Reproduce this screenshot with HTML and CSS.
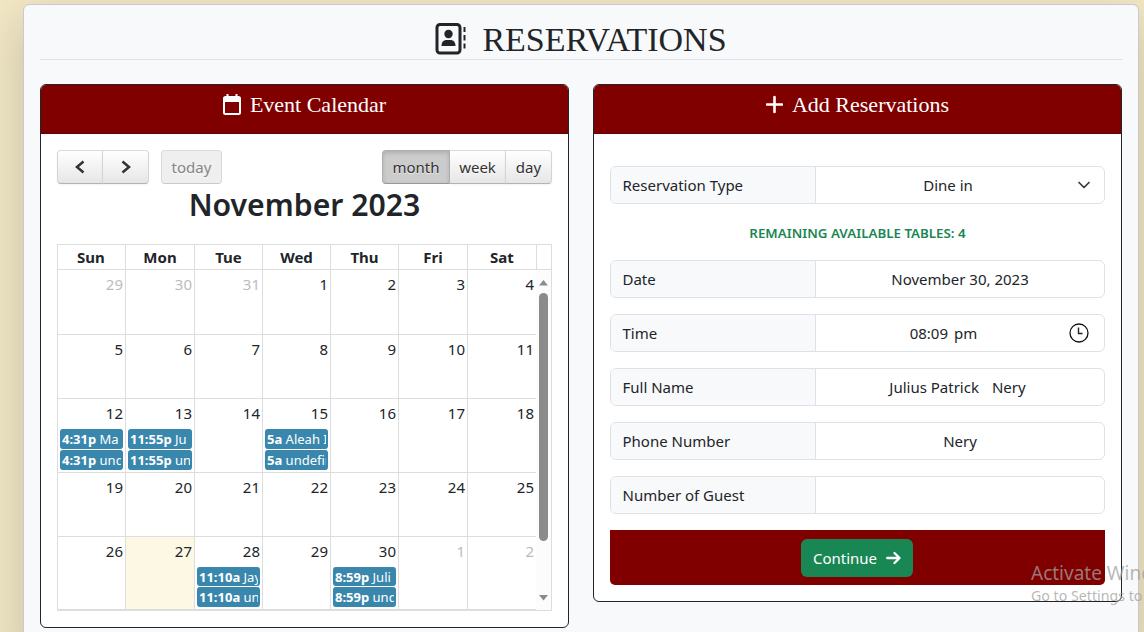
FILE: index.html
```html
<!DOCTYPE html>
<html lang="en">
<head>
<meta charset="utf-8">
<title>Reservations</title>
<link rel="stylesheet" href="styles.css">
</head>
<body>
<main class="panel">
  <h1 class="page-title">
    <svg class="title-icon" width="32" height="34" viewBox="0 0 32 34"><rect x="2" y="2.5" width="23" height="28.5" rx="3" fill="none" stroke="currentColor" stroke-width="3"/><circle cx="13.5" cy="12" r="4.2" fill="currentColor"/><path d="M6.5 24c0-4 2.200-6 5-6h4c2.800 0 5 2 5 6z" fill="currentColor"/><path d="M29.500 5v5M29.500 13v5.500M29.500 21.500v5" stroke="currentColor" stroke-width="2"/></svg>
    <span>RESERVATIONS</span>
  </h1>
  <div class="columns">
    <section class="card calendar-card">
      <header class="card-header">
        <svg width="18" height="21" viewBox="0 0 18 21"><path d="M4.500 0v4M13.500 0v4" stroke="#fff" stroke-width="2"/><rect x="1" y="3" width="16" height="17" rx="1.500" fill="none" stroke="#fff" stroke-width="2"/><path d="M1 3h16v5H1z" fill="#fff"/></svg>
        <span>Event Calendar</span>
      </header>
      <div class="calendar">
        <div class="toolbar">
          <div class="btn-group">
            <button class="fc-btn arrow"><svg width="10" height="14" viewBox="0 0 10 14"><path d="M8.500 1.500L2 7l6.500 5.500" fill="none" stroke="#333" stroke-width="2.500"/></svg></button>
            <button class="fc-btn arrow"><svg width="10" height="14" viewBox="0 0 10 14"><path d="M1.500 1.500L8 7l-6.500 5.500" fill="none" stroke="#333" stroke-width="2.500"/></svg></button>
          </div>
          <button class="fc-btn today-btn">today</button>
          <div class="btn-group views">
            <button class="fc-btn month active">month</button>
            <button class="fc-btn week">week</button>
            <button class="fc-btn dayview">day</button>
          </div>
        </div>
        <h2 class="month-title">November 2023</h2>
        <div class="grid-frame">
          <div class="weekdays"><b>Sun</b><b>Mon</b><b>Tue</b><b>Wed</b><b>Thu</b><b>Fri</b><b>Sat</b><b></b></div>
          <div class="scroller">
            <div class="days">
              <div class="day other">29</div><div class="day other">30</div><div class="day other">31</div><div class="day">1</div><div class="day">2</div><div class="day">3</div><div class="day">4</div>
              <div class="day">5</div><div class="day">6</div><div class="day">7</div><div class="day">8</div><div class="day">9</div><div class="day">10</div><div class="day">11</div>
              <div class="day">12<div class="events"><p class="event"><b>4:31p</b> Ma</p><p class="event"><b>4:31p</b> undefined</p></div></div>
              <div class="day">13<div class="events"><p class="event"><b>11:55p</b> Ju</p><p class="event"><b>11:55p</b> undefined</p></div></div>
              <div class="day">14</div>
              <div class="day">15<div class="events"><p class="event"><b>5a</b> Aleah Ivy</p><p class="event"><b>5a</b> undefined</p></div></div>
              <div class="day">16</div><div class="day">17</div><div class="day">18</div>
              <div class="day">19</div><div class="day">20</div><div class="day">21</div><div class="day">22</div><div class="day">23</div><div class="day">24</div><div class="day">25</div>
              <div class="day">26</div><div class="day today">27</div>
              <div class="day">28<div class="events"><p class="event short"><b>11:10a</b> Jay</p><p class="event"><b>11:10a</b> undefined</p></div></div>
              <div class="day">29</div>
              <div class="day">30<div class="events"><p class="event short"><b>8:59p</b> Juli</p><p class="event"><b>8:59p</b> undefined</p></div></div>
              <div class="day other">1</div><div class="day other">2</div>
            </div>
            <div class="scrollbar">
              <svg width="9" height="6" viewBox="0 0 9 6"><path d="M4.500 0L9 5.500H0z" fill="#8b8b8b"/></svg>
              <i class="thumb"></i>
              <svg class="down" width="9" height="6" viewBox="0 0 9 6"><path d="M0 0h9L4.500 5.500z" fill="#8b8b8b"/></svg>
            </div>
          </div>
        </div>
      </div>
    </section>
    <section class="card form-card">
      <header class="card-header">
        <svg width="17" height="21" viewBox="0 0 17 21"><path d="M8.500 3v15M1 10.500h15" stroke="#fff" stroke-width="2.600" stroke-linecap="round"/></svg>
        <span>Add Reservations</span>
      </header>
      <form class="form">
        <div class="field first"><label>Reservation Type</label><div class="value select"><span>Dine in</span><svg class="end-icon" width="16" height="16" viewBox="0 0 16 16"><path d="M3 5.500l5 5 5-5" fill="none" stroke="#343a40" stroke-width="1.700" stroke-linecap="round" stroke-linejoin="round"/></svg></div></div>
        <p class="tables-left">REMAINING AVAILABLE TABLES: 4</p>
        <div class="field"><label>Date</label><div class="value">November 30, 2023</div></div>
        <div class="field"><label>Time</label><div class="value time"><span>08:09</span><span>pm</span><svg class="end-icon" width="20" height="20" viewBox="0 0 20 20"><circle cx="10" cy="10" r="9" fill="none" stroke="#111" stroke-width="1.300"/><path d="M9.500 4.500v6h4" fill="none" stroke="#222" stroke-width="1.400"/></svg></div></div>
        <div class="field"><label>Full Name</label><div class="value name"><span>Julius Patrick</span><span>Nery</span></div></div>
        <div class="field"><label>Phone Number</label><div class="value">Nery</div></div>
        <div class="field"><label>Number of Guest</label><div class="value"></div></div>
        <div class="form-footer">
          <button type="button" class="continue"><span>Continue</span><svg width="15" height="14" viewBox="0 0 15 14"><path d="M1.200 7h12M8.500 2l5 5-5 5" fill="none" stroke="#fff" stroke-width="2.300" stroke-linecap="round" stroke-linejoin="round"/></svg></button>
        </div>
      </form>
    </section>
  </div>
</main>
<aside class="watermark"><div class="wm-title">Activate Windows</div><div class="wm-text">Go to Settings to activate Windows.</div></aside>
</body>
</html>
```
FILE: styles.css
```css
* { box-sizing: border-box; }
html, body { height: 100%; }
body {
  margin: 0;
  padding: 4px 5px 0 23px;
  overflow: hidden;
  position: relative;
  background: #f1e7c5;
  color: #212529;
  font: 15px/24px "Noto Sans", "Open Sans", sans-serif;
}
h1, h2, p { margin: 0; font-weight: 400; }
button { font: inherit; color: inherit; margin: 0; padding: 0; }
.panel {
  height: 660px;
  padding: 0 16px;
  background: #f8f9fa;
  background-clip: padding-box;
  border: 1px solid #c9cacd;
  border-radius: 6px;
  box-shadow: 0 16px 48px rgba(0, 0, 0, .175);
}
.page-title {
  height: 55px;
  border-bottom: 1px solid #dee2e6;
  display: flex;
  justify-content: center;
  gap: 15px;
  font: 34px/36px "Liberation Serif", serif;
  padding-top: 17px;
}
.columns {
  display: grid;
  grid-template-columns: 529px 529px;
  gap: 24px;
  align-items: start;
  padding-top: 24px;
}
.card {
  background: #fff;
  border: 1px solid #212529;
  border-radius: 6px;
  overflow: hidden;
}
.calendar-card { height: 544px; }
.form-card { height: 518px; }
.card-header {
  height: 49px;
  padding-top: 8px;
  display: flex;
  justify-content: center;
  gap: 9px;
  background: #800000;
  border-bottom: 1px solid #5a0508;
  color: #fff;
  font: 22px/24px "Liberation Serif", serif;
}
.card-header svg { margin-top: 1px; }
.calendar { padding: 16px; }
.toolbar { display: flex; height: 34px; }
.btn-group { display: flex; }
.fc-btn {
  height: 34px;
  background: linear-gradient(#fff, #e6e6e6);
  border: 1px solid;
  border-color: #dadada #d4d4d4 #b3b3b3;
  border-radius: 4px;
  color: #333;
  text-shadow: 0 1px 1px rgba(255, 255, 255, .75);
  box-shadow: 0 1px 2px rgba(0, 0, 0, .05);
  display: flex;
  align-items: center;
  justify-content: center;
}
.arrow { width: 46px; }
.btn-group .fc-btn:first-child { border-radius: 4px 0 0 4px; }
.btn-group .fc-btn:last-child { border-radius: 0 4px 4px 0; }
.btn-group .fc-btn + .fc-btn { margin-left: -1px; }
.btn-group .fc-btn.week { border-radius: 0; }
.arrow + .arrow { width: 47px; }
.today-btn { width: 61px; margin-left: 12px; background: #efefef; border-color: #dcdcdc #d8d8d8 #cacaca; color: #858585; box-shadow: none; }
.views { margin-left: auto; }
.month { width: 68px; }
.month.active { background: #ccc; border-color: #b0b0b0 #b0b0b0 #989898; box-shadow: inset 0 2px 4px rgba(0, 0, 0, .15); }
.views .fc-btn.week { width: 56px; border-left: 0; margin-left: 0; }
.dayview { width: 47px; }
.month-title { height: 60px; text-align: center; font-size: 30.2px; font-weight: 600; line-height: 42px; }
.grid-frame { width: 495px; height: 367px; border: 1px solid #ddd; }
.weekdays, .days { display: grid; grid-template-columns: 68px 69px 68px 68px 68px 69px 69px 14px; }
.weekdays { height: 25px; border-bottom: 1px solid #ddd; margin-left: -1px; width: 494px; text-align: center; }
.weekdays b + b { border-left: 1px solid #ddd; }
.scroller { height: 340px; display: flex; }
.days {
  width: 479px;
  margin-left: -1px;
  grid-template-columns: 68px 69px 68px 68px 68px 69px 69px;
  grid-template-rows: 65px 64px 74px 64px 73px;
}
.day { min-width: 0; border-left: 1px solid #ddd; border-bottom: 1px solid #ddd; padding: 2px 2px 0; text-align: right; }
.day.other { color: #bcbcbc; }
.day.today { background: #fcf8e3; }
.events { padding-top: 4px; }
.event {
  height: 20px;
  margin-bottom: 1px;
  border: solid #3a87ad;
  border-width: 0 2px;
  border-radius: 3px;
  background: #3a87ad;
  color: #fff;
  font-size: 13px;
  line-height: 20px;
  text-align: left;
  white-space: nowrap;
  overflow: hidden;
}
.event.short { height: 19px; }
.scrollbar { width: 15px; background: #fcfcfc; display: flex; flex-direction: column; align-items: center; padding-top: 10px; }
.thumb { width: 9px; height: 248px; margin-top: 7px; border-radius: 5px; background: #8b8b8b; }
.scrollbar .down { margin-top: 54px; }
.form { padding: 32px 16px 16px; }
.field { display: flex; height: 38px; margin-bottom: 16px; border: 1px solid #dee2e6; border-radius: 6px; overflow: hidden; }
.field label { width: 205px; padding: 6px 11.5px; background: #f8f9fa; border-right: 1px solid #dee2e6; }
.value { flex: 1; display: flex; justify-content: center; position: relative; padding: 6px 12px; }
.value.select { padding-right: 36px; }
.value.time { padding-right: 45px; gap: 6px; }
.value.name { gap: 13px; padding-right: 17px; }
.end-icon { position: absolute; right: 12px; top: 10px; }
.time .end-icon { right: 15px; top: 8px; }
.field.first { margin-bottom: 0; }
.tables-left { height: 56px; padding-top: 17px; text-align: center; color: #198754; font-size: 13.35px; font-weight: 600; }
.form-footer { height: 55px; background: #800000; border-radius: 0 0 5px 5px; display: flex; align-items: center; justify-content: center; padding-right: 1px; }
.continue { width: 112px; height: 38px; border: 0; border-radius: 6px; background: #198754; color: #fff; display: flex; align-items: center; justify-content: center; gap: 9px; }
.watermark { position: absolute; left: 1031px; top: 560px; width: 113px; overflow: hidden; white-space: nowrap; color: rgba(160, 160, 160, .75); }
.wm-title { font-size: 19px; line-height: 26px; }
.wm-text { font-size: 14.2px; line-height: 20px; }
```
